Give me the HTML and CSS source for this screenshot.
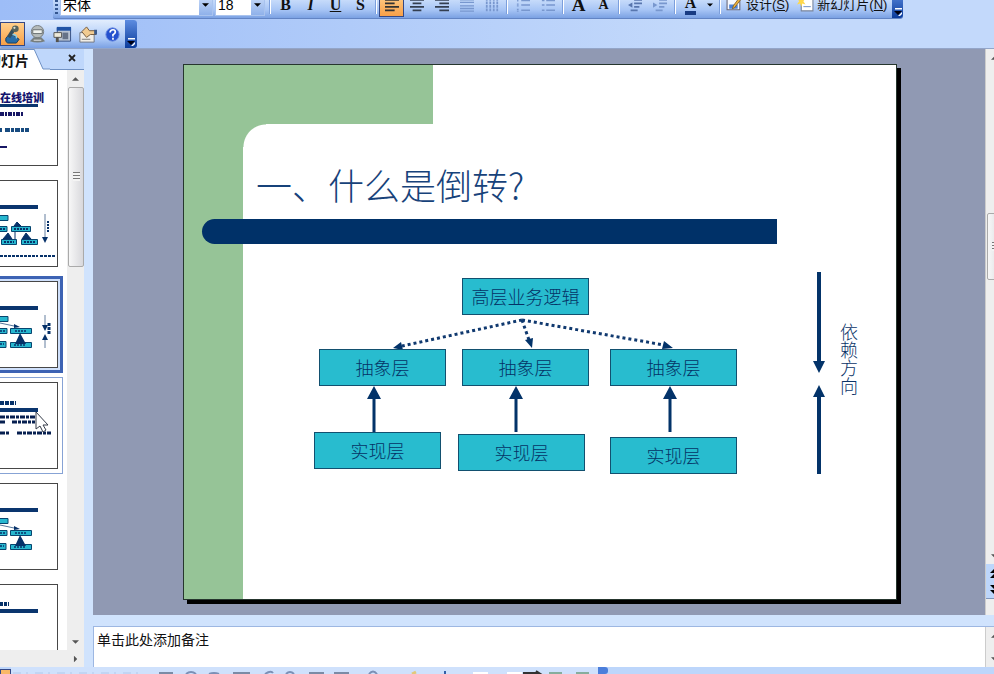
FILE: index.html
```html
<!DOCTYPE html>
<html lang="zh-CN">
<head>
<meta charset="utf-8">
<title>一、什么是倒转？</title>
<link rel="stylesheet" href="styles.css">
</head>
<body>
<svg width="0" height="0" class="defs" aria-hidden="true">
  <defs>
    <symbol id="down" viewBox="0 0 8 4"><path d="M0 0h8L4 4z"/></symbol>
    <symbol id="cap" viewBox="0 0 8 8"><path d="M1 0h7v1.500H1z" fill="#fff"/><path d="M0 3h8L4 7z" fill="#001"/><path d="M4 8l4-4v2L6 8z" fill="#fff"/></symbol>
    <symbol id="mini" viewBox="0 0 58 87">
      <path d="M0 25h38v4H0z" fill="#0a356e"/>
      <g fill="#27b7cf" stroke="#07456f" stroke-width="1">
        <path d="M-8 35.500H8v5H-8zM-8 47.500H7v5H-8zM10.500 47.500h21v5h-21zM-8 60.500H6v6H-8zM10.500 61.500h21v5h-21z"/>
      </g>
      <path d="M0 42l14 3" stroke="#56779b" stroke-width="1"/>
      <path d="M14 43l6 3-6 1zM20 52l-5 11h11z" fill="#063169"/>
      <path d="M0 50h5M15 50h11M0 63h4M14 64h12" stroke="#063169" stroke-width="1.500" stroke-dasharray="2 1"/>
    </symbol>
  </defs>
</svg>

<header class="bars">
  <div class="format" role="toolbar" aria-label="格式">
    <span class="grip"></span>
    <label class="combo face"><select aria-label="字体"><option>宋体</option></select><svg class="drop"><use href="#down"/></svg></label>
    <label class="combo size"><select aria-label="字号"><option>18</option></select><svg class="drop"><use href="#down"/></svg></label>
    <span class="sep"></span>
    <button class="tool serif" aria-label="加粗"><b>B</b></button>
    <button class="tool serif" aria-label="倾斜"><b><i>I</i></b></button>
    <button class="tool serif" aria-label="下划线"><b><u>U</u></b></button>
    <button class="tool serif" aria-label="阴影"><b>S</b></button>
    <span class="sep"></span>
    <button class="tool on" aria-label="左对齐"><svg viewBox="0 0 16 16"><path d="M0 2h16M0 6h11M0 10h16M0 14h11" stroke="#333" stroke-width="2"/></svg></button>
    <button class="tool" aria-label="居中"><svg viewBox="0 0 16 16"><path d="M0 2h16M3 6h10M0 10h16M3 14h10" stroke="#333e50" stroke-width="2"/></svg></button>
    <button class="tool" aria-label="右对齐"><svg viewBox="0 0 16 16"><path d="M0 2h16M5 6h11M0 10h16M5 14h11" stroke="#333e50" stroke-width="2"/></svg></button>
    <button class="tool" aria-label="分散对齐"><svg viewBox="0 0 16 16"><path d="M0 2h16M0 5h16M0 9h16M0 12h16M0 15h16" stroke="#7897ce" stroke-width="1.500"/></svg></button>
    <button class="tool" aria-label="更改文字方向"><svg viewBox="0 0 16 16"><path d="M2 0v16M6 0v16M10 0v16M14 0v16" stroke="#7897ce" stroke-width="2" stroke-dasharray="3 1"/></svg></button>
    <span class="sep"></span>
    <button class="tool" aria-label="编号"><svg viewBox="0 0 16 16"><path d="M6 3h10M6 8h10M6 14h10M2 0v4M1 7h2M1 9h2M1 13h2M1 15h2" stroke="#7897ce" stroke-width="1.500"/></svg></button>
    <button class="tool" aria-label="项目符号"><svg viewBox="0 0 16 16"><path d="M6 3h10M6 8h10M6 14h10M1 3h3M1 8h3M1 14h3" stroke="#7897ce" stroke-width="1.500"/></svg></button>
    <span class="sep"></span>
    <button class="tool serif big" aria-label="增大字号"><b>A</b></button>
    <button class="tool serif small" aria-label="减小字号"><b>A</b></button>
    <span class="sep"></span>
    <button class="tool" aria-label="减少缩进量"><svg viewBox="0 0 16 16"><path d="M7 2h9M7 6h9M7 10h6M3 14h8" stroke="#5876ae" stroke-width="2"/><path d="M5 5v6L0 8z" fill="#5876ae"/></svg></button>
    <button class="tool" aria-label="增加缩进量"><svg viewBox="0 0 16 16"><path d="M7 2h9M7 6h9M7 10h6M3 14h8" stroke="#7897ce" stroke-width="2"/><path d="M0 5v6l5-3z" fill="#7897ce"/></svg></button>
    <span class="sep"></span>
    <button class="tool serif color" aria-label="字体颜色"><b>A</b></button>
    <button class="more" aria-label="更多颜色"><svg class="drop"><use href="#down"/></svg></button>
    <span class="sep"></span>
    <button class="text"><svg viewBox="0 0 16 16"><path d="M1 2h12v11H1z" fill="#f6f9ff" stroke="#667" /><path d="M3 8h8v4H3z" fill="#4b82d8"/><path d="M15 2l-7 9-2 1 1-3 6-8z" fill="#edb23f" stroke="#74521c" stroke-width=".7"/></svg>设计(<u>S</u>)</button>
    <button class="text"><svg viewBox="0 0 16 16"><path d="M4 3h11v11H4z" fill="#fff" stroke="#78849c"/><path d="M6 10h7" stroke="#7897ce"/><path d="M4 0l1 3 3-1-2 3 2 3-3-1-1 3-1-3-3 1 2-3-2-3 3 1z" fill="#ffd84a"/></svg>新幻灯片(<u>N</u>)</button>
    <button class="end" aria-label="工具栏选项"><svg><use href="#cap"/></svg></button>
  </div>
  <div class="review" role="toolbar" aria-label="远程">
    <button class="tool on" aria-label="麦克风"><svg viewBox="0 0 20 20"><path d="M3 14q3-5 8-3l6 4-3 4H5q-3-1-2-5z" fill="#276da8" stroke="#163f62"/><path d="M6 13l5-8" stroke="#334e5d" stroke-width="4"/><circle cx="13" cy="4" r="3.500" fill="#56635c"/><circle cx="12" cy="3" r="1.200" fill="#dce4d4"/><path d="M10 10q5 0 4 4" stroke="#85d0ec" fill="none" stroke-width="1.500"/></svg></button>
    <button class="tool" aria-label="摄像头"><svg viewBox="0 0 20 20"><circle cx="10" cy="7" r="6.500" fill="#b5bbba" stroke="#777d80"/><path d="M5 5h10v4H5z" fill="#eff2ee" stroke="#676e70"/><path d="M6 13l-4 4q8 3 16 0l-4-4z" fill="#777e7d"/><path d="M6 16h8" stroke="#eee"/></svg></button>
    <button class="tool" aria-label="窗口"><svg viewBox="0 0 20 20"><path d="M4.500 3h14v14h-14z" fill="#b8c3d3" stroke="#344d80"/><path d="M4 2h15v4H4z" fill="#2153a5"/><path d="M10 8h6v7h-6z" fill="#667287"/><path d="M1 8h8v5H1z" fill="#eee9d8" stroke="#555"/><path d="M3 13h3v5H3z" fill="#55534d"/></svg></button>
    <button class="tool" aria-label="共享"><svg viewBox="0 0 20 20"><path d="M2 8h15v10H2z" fill="#f2eee6" stroke="#6e7481"/><path d="M4 7l5-5 3 4h7v4h-6l-4 3z" fill="#f1cb91" stroke="#73583b"/><path d="M4 15h9" stroke="#777"/><path d="M17 5h3v5h-3z" fill="#3c5a8a"/></svg></button>
    <button class="tool" aria-label="帮助"><svg viewBox="0 0 20 20"><circle cx="10" cy="10" r="7" fill="#2551ce" stroke="#6e8de0"/><path d="M7.500 8q0-3 3-3 2.500 0 2.500 2.300 0 1.500-2.500 3v1.700M10.500 13.500v2" fill="none" stroke="#fff" stroke-width="1.800"/></svg></button>
    <button class="end" aria-label="工具栏选项"><svg><use href="#cap"/></svg></button>
  </div>
</header>

<main class="work">
  <aside class="outline">
    <div class="tabs">
      <button class="tab">幻灯片</button>
      <svg class="slant" viewBox="0 0 16 21" aria-hidden="true"><path d="M0 0L9 20H16V21H0z" fill="#fff"/><path d="M0 0l9 20h7" fill="none" stroke="#6f91c4"/></svg>
      <button class="close" aria-label="关闭"><svg viewBox="0 0 8 8"><path d="M1 1l6 6M7 1L1 7" stroke="#222" stroke-width="1.800"/></svg></button>
    </div>
    <div class="list">
      <div class="thumbs">
        <div class="thumb"><svg viewBox="0 0 58 87"><text x="0" y="23" class="mini-title">在线培训</text><path d="M0 25h38v3H0z" fill="#0a356e"/><g stroke="#171765" stroke-width="4"><path d="M0 35h24" stroke-dasharray="4 1 2 1"/><path d="M0 51h2M5 51h24" stroke="#174b80" stroke-dasharray="5 1 3 1"/><path d="M0 68h7" stroke-width="2"/></g></svg></div>
        <div class="thumb"><svg viewBox="0 0 58 87"><path d="M0 25h38v4H0z" fill="#0a356e"/><g fill="#27b7cf" stroke="#07456f"><path d="M-8 35.500H8v5H-8zM-8 46.500H7v5H-8zM11.500 46.500h19v5h-19zM1.500 59.500h15v5h-15zM21.500 59.500h16v5h-16z"/></g><path d="M14 46l3-4 4 4zM3 59l5-6 4 6zM22 59l4-6 5 6zM15 52v7" fill="#063169" stroke="#063169"/><path d="M45 34v27" stroke="#657f9f"/><path d="M42 57h6l-3 6z" fill="#063169"/><path d="M48 41v12M0 49h6M14 49h14M4 62h10M24 62h11" stroke="#063169" stroke-width="2" stroke-dasharray="2 1"/><path d="M0 76h38M40 76h15" stroke="#063169" stroke-width="2" stroke-dasharray="3 1"/></svg></div>
        <div class="thumb current"><svg viewBox="0 0 58 87"><use href="#mini"/><path d="M45 34v10M45 57v10" stroke="#657f9f"/><path d="M42 44h6l-3 6zM42 59h6l-3-6z" fill="#063169"/><path d="M49 42v12" stroke="#063169" stroke-width="3" stroke-dasharray="3 1"/></svg></div>
        <div class="thumb hover"><svg viewBox="0 0 58 87"><path d="M0 21h16" stroke="#063169" stroke-width="4" stroke-dasharray="4 1"/><path d="M0 26h38v4H0z" fill="#0a356e"/><path d="M0 35h36M0 40h6M12 40h23M0 51h10M17 51h34" stroke="#061f50" stroke-width="3" stroke-dasharray="5 1 3 1"/></svg>
          <svg class="pointer" viewBox="0 0 14 22"><path d="M1 1v17l4-3 3 6 3-2-3-5h5z" fill="#fff" stroke="#343b48"/></svg></div>
        <div class="thumb"><svg viewBox="0 0 58 87"><use href="#mini"/></svg></div>
        <div class="thumb"><svg viewBox="0 0 58 87"><path d="M0 20h9" stroke="#063169" stroke-width="4" stroke-dasharray="3 1"/><path d="M0 25h38v4H0z" fill="#0a356e"/></svg></div>
      </div>
      <div class="vscroll">
        <button class="arrow" aria-label="向上"><svg class="flip"><use href="#down"/></svg></button>
        <span class="handle"><i></i></span>
        <button class="arrow" aria-label="向下"><svg><use href="#down"/></svg></button>
      </div>
    </div>
    <div class="hscroll"><button class="arrow" aria-label="向右"><svg class="right"><use href="#down"/></svg></button></div>
  </aside>

  <section class="editor">
    <div class="view">
      <div class="stage">
        <article class="slide">
          <h1>一、什么是倒转?</h1>
          <div class="rule"></div>
          <div class="diagram">
            <svg class="links" viewBox="0 0 712 355" aria-hidden="true">
              <g stroke="#10396f" stroke-width="3" stroke-dasharray="3 3"><path d="M338 76L218 102M338 76l7 20M338 76l142 25"/></g>
              <g fill="#033369"><path d="M209 104l8-6 2 8zM341 96l8-2-1 10zM480 97l9 7-11 1z"/><path d="M183 155l7-13 7 13zM325 155l7-13 7 13zM479 155l7-13 7 13zM629 117h12l-6 12zM629 153h12l-6-12z"/></g>
              <path d="M190 150v39M332 150v38M486 150v38" stroke="#033369" stroke-width="3"/>
              <path d="M635 28v90M635 152v78" stroke="#033369" stroke-width="4"/>
            </svg>
            <div class="node top">高层业务逻辑</div>
            <div class="node a1">抽象层</div>
            <div class="node a2">抽象层</div>
            <div class="node a3">抽象层</div>
            <div class="node b1">实现层</div>
            <div class="node b2">实现层</div>
            <div class="node b3">实现层</div>
            <div class="direction">依赖方向</div>
          </div>
        </article>
      </div>
      <div class="edge">
        <button class="arrow" aria-label="向上"><svg class="flip"><use href="#down"/></svg></button>
        <span class="handle"><i></i></span>
        <button class="arrow" aria-label="向下"><svg><use href="#down"/></svg></button>
        <div class="jump">
          <button aria-label="上一张幻灯片"><svg viewBox="0 0 10 12"><path d="M0 6l5-5 5 5zM0 11l5-5 5 5z"/></svg></button>
          <button aria-label="下一张幻灯片"><svg viewBox="0 0 10 12"><path d="M0 1h10L5 6zM0 6h10l-5 5z"/></svg></button>
        </div>
      </div>
    </div>
    <div class="notes">
      <textarea aria-label="备注" placeholder="单击此处添加备注"></textarea>
      <div class="edge"><button class="arrow" aria-label="向上"><svg class="flip"><use href="#down"/></svg></button><button class="arrow" aria-label="向下"><svg><use href="#down"/></svg></button></div>
    </div>
  </section>
</main>

<footer class="drawing" role="toolbar" aria-label="绘图">
  <span class="picked"></span>
  <svg class="tops" viewBox="0 0 587 7" aria-hidden="true">
    <path d="M2 6h130" stroke="#b3c8ea" stroke-dasharray="8 5 2 7"/>
    <path d="M148 6h14M222 6h17M298 6h15M323 6h15" stroke="#7b8ba6" stroke-width="2"/>
    <path d="M175 7q5-4 10 0M254 7q6-4 8-1M275 7q4-4 8 0M358 7q4-5 8 0M198 7q5-2 10 0" fill="none" stroke="#7b90b6" stroke-width="2"/>
    <path d="M401 7l4-2" stroke="#e2c87a" stroke-width="3"/>
    <path d="M434 4v3" stroke="#315fa7" stroke-width="2"/>
    <path d="M462 6h15M496 6h15" stroke="#fff" stroke-width="2"/>
    <path d="M512 6h16l-3-2" stroke="#333" stroke-width="2" fill="none"/>
    <path d="M538 6h13M565 6h13" stroke="#86ad9d" stroke-width="2"/>
  </svg>
  <span class="end"></span>
</footer>
</body>
</html>
```

FILE: styles.css
```css
* { box-sizing: border-box; }

body {
  margin: 0;
  height: 100vh;
  display: flex;
  flex-direction: column;
  overflow: hidden;
  background: #c3d9fb;
  font: 13px/16px "Liberation Sans", "Noto Sans CJK SC", sans-serif;
  color: #111;
}

button {
  margin: 0;
  padding: 0;
  border: 0;
  background: none;
  font: inherit;
  color: inherit;
}

svg { display: block; }
.defs { position: absolute; }

/* Toolbars */
.bars {
  flex: none;
  background: linear-gradient(90deg, #9dbdf7, #c3d9fb 70%);
  border-bottom: 1px solid #93a5c8;
  overflow: hidden;
}

.format, .review {
  display: flex;
  align-items: center;
  width: max-content;
  background: linear-gradient(#e2edfd, #c5dafa 35%, #a7c5f5 70%, #7ba1e3);
  border-radius: 2px 3px 3px 2px;
}

.format {
  height: 28px;
  margin: -9px 0 0 53px;
  border-bottom: 1px solid #6284c4;
}

.review {
  height: 28px;
  margin-top: 1px;
}

.grip {
  width: 3px;
  height: 18px;
  margin: 0 2px;
  background: repeating-linear-gradient(#34568f 0 2px, transparent 2px 4px);
}

.combo {
  display: flex;
  align-items: center;
  height: 23px;
  margin-right: 2px;
  background: #fff;
  border: 1px solid #a9c3ee;
}
.combo select {
  flex: 1;
  min-width: 0;
  appearance: none;
  border: 0;
  padding: 0 2px;
  background: #fff;
  font: 14px/16px "Liberation Sans", "Noto Sans CJK SC", sans-serif;
}
.combo .drop {
  height: 21px;
  padding: 9px 3px 8px;
  background: linear-gradient(#cfe0fb, #8fb1ea);
}
.face { width: 153px; }
.size { width: 50px; }
.drop { width: 13px; height: 4px; }

.sep {
  width: 2px;
  height: 18px;
  margin: 0 2px;
  background: linear-gradient(90deg, #7c9fdc 50%, #fff 50%);
}

.tool {
  display: grid;
  place-items: center;
  width: 25px;
  height: 24px;
}
.format .tool svg { width: 16px; height: 14px; }
.tool.on {
  background: linear-gradient(#ffd08c, #f8a048);
  border: 1px solid #344885;
}
.serif { font: 16px/18px "Liberation Serif", serif; }
.big { font-size: 19px; }
.small { font-size: 14px; }
.color b { line-height: 16px; border-bottom: 4px solid #183b82; }
.more { width: 14px; }
.more .drop { width: 6px; margin: 0 auto; }

.text {
  display: flex;
  align-items: center;
  padding: 0 5px 0 3px;
}
.text svg {
  width: 17px;
  height: 17px;
  margin-right: 3px;
}

.end {
  align-self: stretch;
  display: flex;
  align-items: flex-end;
  justify-content: center;
  width: 11px;
  background: linear-gradient(#5d8ce0, #0b3c9c);
  border-radius: 0 3px 3px 0;
}
.end svg { width: 8px; height: 8px; margin-bottom: 2px; }

.review .tool svg { width: 19px; height: 19px; }
.review .end { width: 12px; }

/* Work area */
.work {
  flex: 1;
  min-height: 0;
  display: grid;
  grid-template-columns: 84px 1fr;
  column-gap: 9px;
  background: #d0e3fd;
}

.outline {
  display: flex;
  flex-direction: column;
  min-height: 0;
  overflow: hidden;
  background: #fff;
}
.tabs {
  display: flex;
  align-items: stretch;
  height: 21px;
  background: #bfd7fb;
}
.tab {
  width: 34px;
  display: flex;
  justify-content: flex-end;
  padding-right: 5px;
  background: #fff;
  border-top: 1px solid #6f91c4;
  font: 700 14px/21px "Noto Sans CJK SC", sans-serif;
  white-space: nowrap;
}
.slant { width: 16px; height: 21px; }
.close {
  flex: 1;
  display: grid;
  place-items: center;
  padding: 0 0 3px 10px;
  border-bottom: 1px solid #6f91c4;
}
.close svg { width: 8px; height: 8px; }

.list {
  flex: 1;
  min-height: 0;
  display: flex;
}
.thumbs {
  flex: 1;
  padding: 9px 9px 0 0;
  display: flex;
  flex-direction: column;
  gap: 14px;
  overflow: hidden;
}
.thumb {
  flex: none;
  position: relative;
  height: 87px;
  border: solid #474747;
  border-width: 1px 1px 1px 0;
  background: #fff;
}
.thumb > svg { width: 58px; height: 87px; margin-top: -1px; }
.current { box-shadow: 0 0 0 2px #cfe0fb, 0 0 0 5px #3d63b4; }
.hover { box-shadow: 0 0 0 4px #fff, 0 0 0 5px #87a3d5; }
.thumb .pointer {
  position: absolute;
  left: 35px;
  top: 29px;
  width: 14px;
  height: 22px;
}
.mini-title { font: 900 11px "Noto Sans CJK SC", sans-serif; fill: #14146e; }

.vscroll, .edge {
  flex: none;
  display: flex;
  flex-direction: column;
  background: #eeeeee;
}
.vscroll { width: 17px; }
.arrow {
  flex: none;
  display: grid;
  place-items: center;
  height: 17px;
  color: #444;
}
.arrow svg { width: 7px; height: 4px; fill: #555; }
.flip { transform: rotate(180deg); }
.arrow .right { transform: rotate(-90deg); }
.handle {
  display: grid;
  place-items: center;
  border: 1px solid #aaa;
  border-radius: 2px;
  background: linear-gradient(90deg, #f7f7f7, #d8d8dc);
}
.handle i {
  width: 7px;
  height: 9px;
  background: repeating-linear-gradient(#777 0 1px, #f4f4f4 1px 3px);
}
.vscroll .handle { height: 31%; margin-left: 1px; }
.vscroll .arrow:last-child { margin-top: auto; }
.hscroll {
  flex: none;
  display: flex;
  justify-content: flex-end;
  height: 17px;
  background: #eeeeee;
}
.hscroll .arrow { width: 17px; }

/* Slide editor */
.editor {
  display: flex;
  flex-direction: column;
  min-width: 0;
  min-height: 0;
}
.view {
  flex: 1;
  min-height: 0;
  display: flex;
  background: #9099b3;
}
.stage {
  flex: 1;
  min-width: 0;
  padding: 15px 88px 0 90px;
  overflow: hidden;
}
.slide {
  display: flex;
  flex-direction: column;
  aspect-ratio: 714 / 536;
  border: 1px solid #26362e;
  background:
    radial-gradient(circle at 100% 100%, transparent 22px, #96c497 23px) 59px 59px / 23px 23px no-repeat,
    linear-gradient(#96c497, #96c497) 0 0 / 59px 100% no-repeat,
    linear-gradient(#96c497, #96c497) 0 0 / 249px 59px no-repeat,
    #fff;
  box-shadow: 4px 4px 0 #000;
}
h1 {
  margin: 97px 0 12px 72px;
  font: 300 36px/45px "Noto Sans CJK SC", sans-serif;
  color: #17427a;
}
.rule {
  flex: none;
  height: 25px;
  margin: 0 119px 0 18px;
  background: #003168;
  border-radius: 13px 0 0 13px;
}
.diagram { flex: 1; position: relative; }
.links { position: absolute; left: 0; top: 0; width: 712px; height: 355px; }
.node {
  position: absolute;
  width: 127px;
  height: 37px;
  background: #28bccf;
  border: 1px solid #12506f;
  font: 300 18px/34px "Noto Sans CJK SC", sans-serif;
  text-align: center;
  color: #053366;
}
.top { left: 278px; top: 34px; }
.a1 { left: 135px; top: 105px; }
.a2 { left: 278px; top: 105px; }
.a3 { left: 426px; top: 105px; }
.b1 { left: 130px; top: 188px; }
.b2 { left: 274px; top: 190px; }
.b3 { left: 426px; top: 193px; }
.direction {
  position: absolute;
  left: 656px;
  top: 79px;
  writing-mode: vertical-rl;
  font: 300 18px/18px "Noto Sans CJK SC", sans-serif;
  color: #0b3468;
}

.edge { width: 9px; overflow: hidden; border-left: 1px solid #ccc; }
.edge .arrow { width: 17px; }
.edge .handle { width: 17px; height: 67px; margin: 147px 0 auto 1px; }
.jump { width: 17px; height: 35px; margin-bottom: 16px; background: #bdd6fb; border-bottom: 1px solid #8096bd; }
.jump button { display: block; height: 17px; padding-left: 4px; }
.jump svg { width: 10px; height: 12px; }

.notes {
  flex: none;
  display: flex;
  height: 41px;
  margin-top: 11px;
  background: #fff;
  border-top: 1px solid #9db7e2;
  border-left: 1px solid #9db7e2;
}
.notes textarea {
  flex: 1;
  border: 0;
  padding: 2px 3px;
  resize: none;
  background: #fff;
  font: 14px/20px "Noto Sans CJK SC", sans-serif;
}
.notes textarea::placeholder { color: #111; opacity: 1; }
.notes .edge { justify-content: space-between; }

/* Drawing toolbar */
.drawing {
  flex: none;
  display: flex;
  height: 7px;
  background: #bdd6fb;
}
.picked { width: 11px; margin-top: 2px; background: #f9b868; border: 1px solid #344885; border-bottom: 0; }
.tops { width: 587px; height: 7px; background: #cfe1fc; }
.drawing .end { width: 10px; background: #4b7edb; }
```
